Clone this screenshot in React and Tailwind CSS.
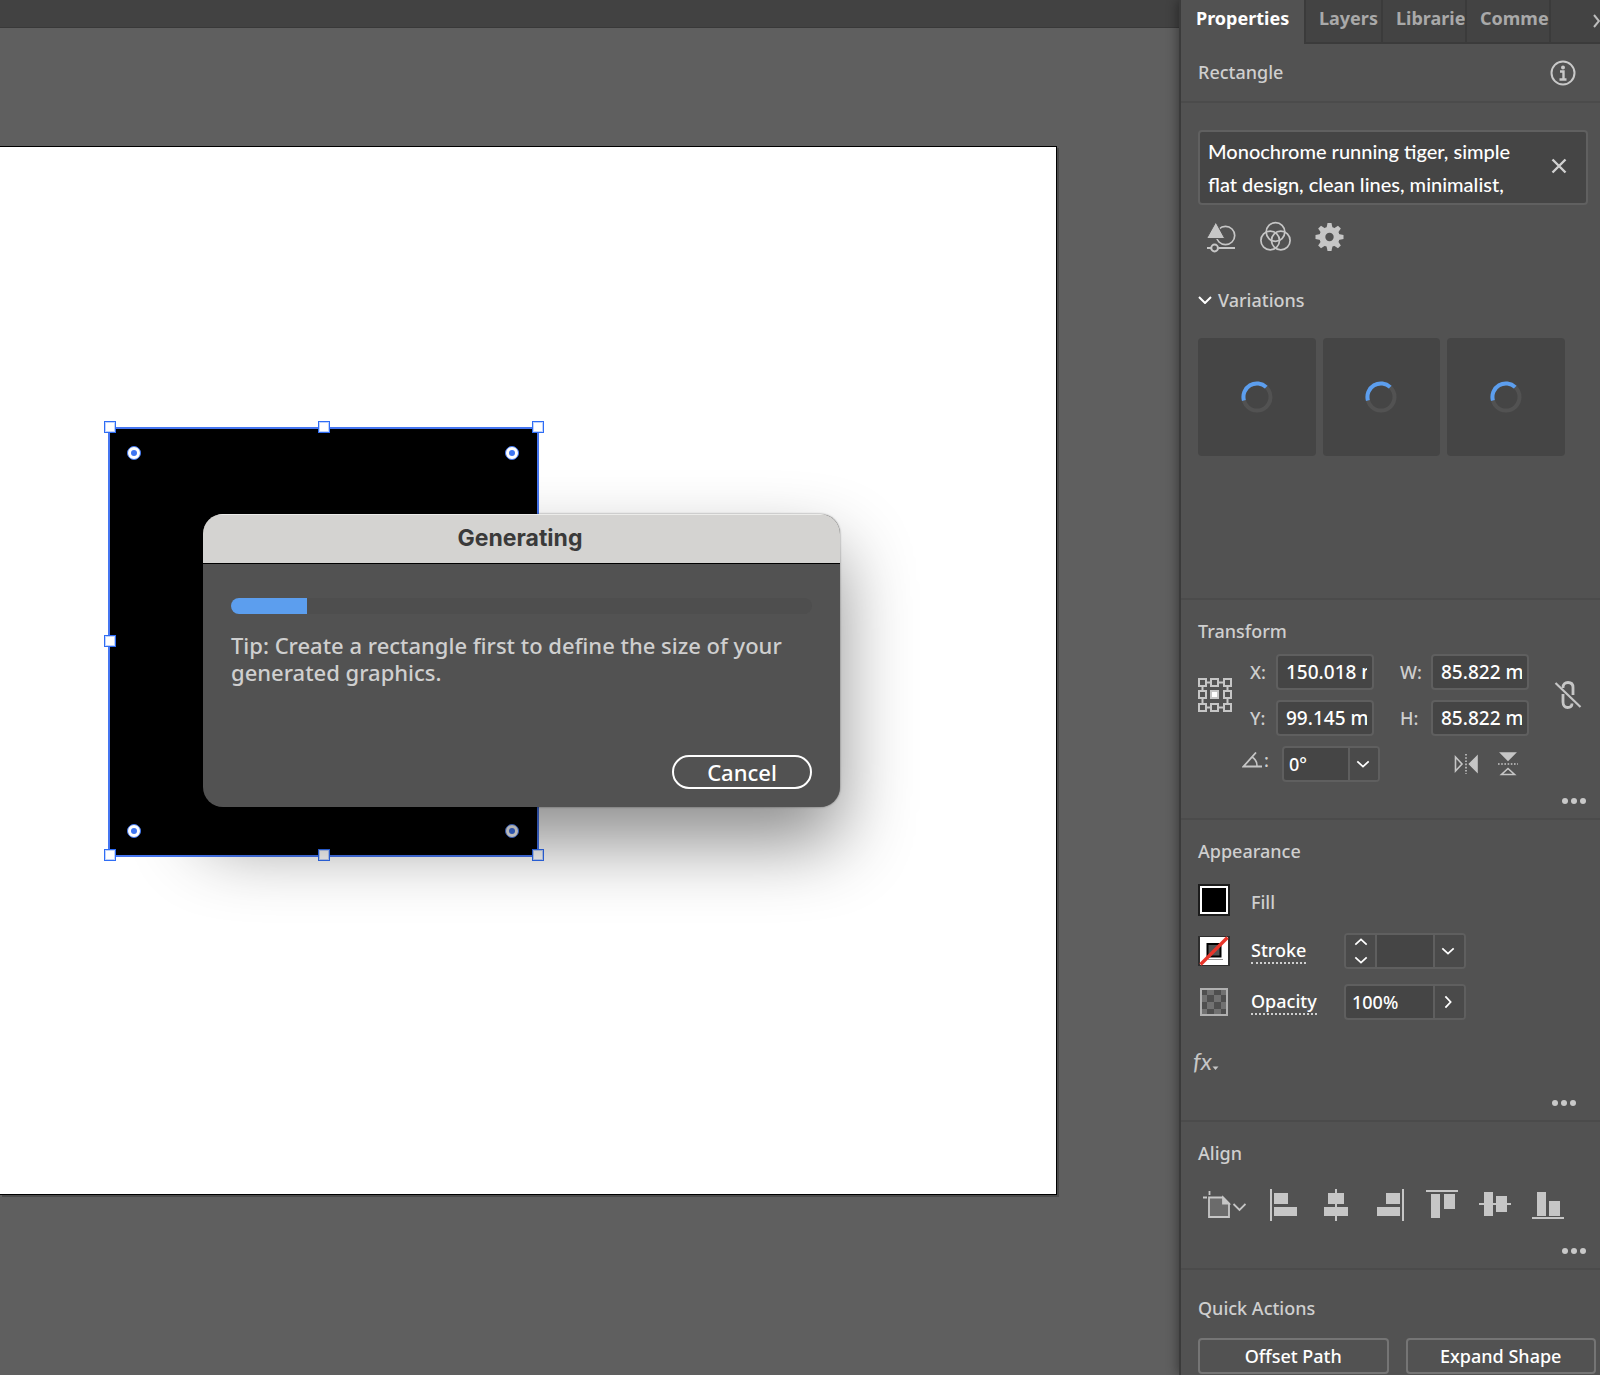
import React from "react";

const LABEL = "text-[#cfcfcf]";

function Chevron({ dir = "down" }) {
  const paths = {
    down: "M1.5 5 L8 11 L14.5 5",
    up: "M1.5 11 L8 5 L14.5 11",
    right: "M5 1.5 L11 8 L5 14.5",
  };
  return (
    <svg width="14" height="14" viewBox="0 0 16 16" fill="none" stroke="#fff" strokeWidth="2" aria-hidden="true">
      <path d={paths[dir]} />
    </svg>
  );
}

function More({ className = "mr-[14px]" }) {
  return (
    <button aria-label="More options" className={`flex h-3 items-center gap-[3px] ${className}`}>
      <span className="size-[6px] rounded-full bg-[#c9c9c9]" />
      <span className="size-[6px] rounded-full bg-[#c9c9c9]" />
      <span className="size-[6px] rounded-full bg-[#c9c9c9]" />
    </button>
  );
}

function Section({ title, children }) {
  return (
    <section className="border-b-2 border-[#4b4b4b] pt-[19px] pb-[11px] pl-[17px]">
      <h2 className={`h-6 text-[18px] leading-6 font-medium ${LABEL}`}>{title}</h2>
      {children}
    </section>
  );
}

function Field({ id, label, value }) {
  return (
    <>
      <label htmlFor={id} className={`text-[18px] font-medium ${LABEL}`}>{label}</label>
      <input
        id={id}
        defaultValue={value}
        className="h-9 w-[98px] rounded-[4px] border-2 border-[#5f5f5f] bg-[#454545] pr-[5px] pl-2 text-[19px] font-medium text-white"
      />
    </>
  );
}

function Spinner() {
  return (
    <div className="flex h-[118px] items-center justify-center rounded-[4px] bg-[#454545]">
      <svg width="32" height="32" viewBox="0 0 32 32" fill="none" strokeWidth="4" role="img" aria-label="Loading">
        <circle cx="16" cy="16" r="13.5" stroke="#525252" />
        <path d="M2.9 19.4 A13.5 13.5 0 0 1 25.2 6.1" stroke="#5c9eee" />
      </svg>
    </div>
  );
}

function Handle({ className }) {
  return <span className={`absolute size-3 border border-[#2f6df5] bg-white outline outline-[#2f6df5]/30 -outline-offset-2 ${className}`} />;
}

function CornerWidget({ className }) {
  return (
    <span className={`absolute flex size-[14px] items-center justify-center rounded-full border border-[#3f76f2] bg-white ${className}`}>
      <span className="size-[6px] rounded-full bg-[#3f76f2]" />
    </span>
  );
}

function SelectedShape() {
  return (
    <div className="absolute top-[280px] left-[108px] h-[430px] w-[431px] border-2 border-[#4575f0] bg-black">
      <Handle className="-top-[8px] -left-[6px]" />
      <Handle className="-top-[8px] left-[208px]" />
      <Handle className="-top-[8px] -right-[7px]" />
      <Handle className="top-[206px] -left-[6px]" />
      <Handle className="-bottom-[6px] -left-[6px]" />
      <Handle className="-bottom-[6px] left-[208px]" />
      <Handle className="-right-[7px] -bottom-[6px]" />
      <CornerWidget className="top-[17px] left-[17px]" />
      <CornerWidget className="top-[17px] right-[18px]" />
      <CornerWidget className="bottom-[17px] left-[17px]" />
      <CornerWidget className="right-[18px] bottom-[17px]" />
    </div>
  );
}

function Dialog() {
  return (
    <div
      role="dialog"
      aria-labelledby="dialog-title"
      className="absolute top-[367px] left-[203px] w-[637px] overflow-hidden rounded-[20px] bg-[#525252] shadow-[0_0_2px_rgba(0,0,0,0.5),0_36px_72px_rgba(0,0,0,0.45)]"
    >
      <h1 id="dialog-title" className="h-[50px] border-t border-b border-t-[#ececea] border-b-black bg-[#d4d3d1] pr-[3px] text-center font-['Inter',sans-serif] text-[23px] leading-[46px] font-bold text-[#3a3a3a]">
        Generating
      </h1>
      <div className="flex flex-col px-[28px] pt-[34px] pb-[18px]">
        <div role="progressbar" aria-label="Generating" aria-valuenow={13} aria-valuemin={0} aria-valuemax={100} className="h-4 overflow-hidden rounded-full bg-[#4e4e4e]">
          <div className="h-full w-[13%] bg-[#5c9eee]" />
        </div>
        <p className="mt-[18px] text-[22px] leading-[27px] font-medium text-[#cfcfcf]">
          Tip: Create a rectangle first to define the size of your
          <br />
          generated graphics.
        </p>
        <button className="mt-[69px] h-[34px] w-[140px] self-end rounded-full border-2 border-white text-[22px] leading-[30px] font-medium text-white">
          Cancel
        </button>
      </div>
    </div>
  );
}

function Tabs() {
  return (
    <div role="tablist" className="flex h-11 text-[18px] font-bold">
      <button role="tab" aria-selected="true" className="w-[123px] pb-[8px] pl-[15px] text-left text-white">Properties</button>
      <div className="flex min-w-0 flex-1 border-b-2 border-[#3b3b3b] bg-[#434343] text-[#a9a9a9]">
        <button role="tab" className="w-[79px] overflow-hidden border-r-2 border-l-2 border-[#3b3b3b] pb-[6px] pl-[13px] text-left">Layers</button>
        <button role="tab" className="w-[84px] overflow-hidden border-r-2 border-[#3b3b3b] pb-[6px] pl-[13px] text-left">Librarie</button>
        <button role="tab" className="w-[84px] overflow-hidden border-r-2 border-[#3b3b3b] pb-[6px] pl-[13px] text-left">Comme</button>
        <button aria-label="More panels" className="flex flex-1 items-center justify-end">
          <svg width="7" height="14" viewBox="0 0 7 14" fill="none" stroke="#bdbdbd" strokeWidth="2" aria-hidden="true">
            <path d="M1 1 L6 7 L1 13" />
          </svg>
        </button>
      </div>
    </div>
  );
}

function GeneratePanel() {
  return (
    <section className="border-b-2 border-[#4b4b4b] pt-[27px] pr-[12px] pb-[142px] pl-[17px]">
      <div className="flex h-[75px] items-center rounded-[4px] border-2 border-[#606060] bg-[#454545] pr-[19px] pl-[8px]">
        <textarea
          aria-label="Prompt"
          rows={2}
          className="h-[66px] flex-1 resize-none overflow-hidden bg-transparent font-['Lato','Open_Sans',sans-serif] text-[20px] leading-[33px] font-medium text-white"
          defaultValue={"Monochrome running tiger, simple\nflat design, clean lines, minimalist,"}
        />
        <button aria-label="Clear prompt" className="mb-1">
          <svg width="16" height="16" viewBox="0 0 16 16" stroke="#d0d0d0" strokeWidth="2.4" aria-hidden="true">
            <path d="M1.5 1.5 L14.5 14.5 M14.5 1.5 L1.5 14.5" />
          </svg>
        </button>
      </div>

      <div className="mt-4 flex h-8 items-center gap-6 pl-[9px]">
        <button aria-label="Style options">
          <svg width="29" height="32" viewBox="0 0 29 32" fill="none" stroke="#c6c6c6" strokeWidth="1.7" aria-hidden="true">
            <circle cx="18.500" cy="14.500" r="9.2" />
            <path d="M8.8 1 L17.800 17.500 H-0.4 Z" fill="#c6c6c6" stroke="#525252" strokeWidth="1" />
            <path d="M0 27 H4 M11.5 27 H28" strokeWidth="2" />
            <circle cx="7.6" cy="27" r="3.4" strokeWidth="2" />
          </svg>
        </button>
        <button aria-label="Colour options">
          <svg width="31" height="32" viewBox="0 0 31 32" fill="none" stroke="#c6c6c6" strokeWidth="1.7" aria-hidden="true">
            <circle cx="15.5" cy="11" r="9.3" />
            <circle cx="10.2" cy="19.500" r="9.3" />
            <circle cx="20.8" cy="19.500" r="9.3" />
          </svg>
        </button>
        <button aria-label="Settings">
          <svg width="29" height="30" viewBox="-14.5 -15 29 30" fill="#c6c6c6" aria-hidden="true">
            <path
              fillRule="evenodd"
              d="M0 -10.2 A10.2 10.2 0 1 1 0 10.2 A10.2 10.2 0 1 1 0 -10.2 Z M0 -4.2 A4.2 4.2 0 1 0 0 4.2 A4.2 4.2 0 1 0 0 -4.2 Z"
            />
            {[0, 45, 90, 135, 180, 225, 270, 315].map((a) => (
              <path key={a} transform={`rotate(${a})`} d="M-3 -9 L-2 -14 H2 L3 -9 Z" />
            ))}
          </svg>
        </button>
      </div>

      <button className={`mt-[35px] flex h-6 items-center gap-[6px] text-[18px] leading-6 font-medium ${LABEL}`}>
        <svg width="14" height="8" viewBox="0 0 14 8" fill="none" stroke="#fff" strokeWidth="2" aria-hidden="true">
          <path d="M1 1 L7 7 L13 1" />
        </svg>
        Variations
      </button>

      <div className="mt-[26px] mr-[23px] grid grid-cols-3 gap-[7px]">
        <Spinner />
        <Spinner />
        <Spinner />
      </div>
    </section>
  );
}

function ReferencePoint() {
  const spots = [1, 13, 26];
  return (
    <svg width="34" height="34" viewBox="0 0 34 34" fill="none" stroke="#c6c6c6" strokeWidth="2" role="img" aria-label="Reference point">
      <path d="M8 4.5 H13 M21 4.5 H26 M8 29.5 H13 M21 29.5 H26 M4.5 8 V13 M4.5 21 V26 M29.5 8 V13 M29.5 21 V26" />
      {spots.map((y) =>
        spots.map((x) => (
          <rect key={`${x}-${y}`} x={x} y={y} width="7" height="7" fill={x === 13 && y === 13 ? "#fff" : "none"} />
        ))
      )}
    </svg>
  );
}

function TransformPanel() {
  return (
    <Section title="Transform">
      <div className="mt-[11px] flex items-center">
        <ReferencePoint />
        <div className="ml-[18px] grid grid-cols-[26px_98px] items-center gap-y-[10px]">
          <Field id="x" label="X:" value="150.018 mm" />
          <Field id="y" label="Y:" value="99.145 mm" />
        </div>
        <div className="ml-[26px] grid grid-cols-[31px_98px] items-center gap-y-[10px]">
          <Field id="w" label="W:" value="85.822 mm" />
          <Field id="h" label="H:" value="85.822 mm" />
        </div>
        <button aria-label="Constrain width and height" className="ml-[25px]">
          <svg width="28" height="30" viewBox="0 0 28 30" fill="none" stroke="#c6c6c6" aria-hidden="true">
            <g strokeWidth="2.800">
              <path d="M9 8 V7.500 C9 4 11 2.500 14 2.500 C17 2.500 19 4 19 7.500 V15" />
              <path d="M9 14 V22 C9 25.500 11 27.500 13.500 27.500 C16.500 27.500 18 26 18 23.500" />
            </g>
            <path d="M1.500 3 L26.500 27" strokeWidth="2.200" />
          </svg>
        </button>
      </div>
      <div className="mt-[10px] flex items-center">
        <label htmlFor="angle" className={`mb-2 ml-11 flex w-[40px] items-center text-[18px] font-medium ${LABEL}`}>
          <svg width="20" height="16" viewBox="0 0 20 16" fill="none" stroke="#c6c6c6" strokeWidth="1.800" role="img" aria-label="Angle">
            <path d="M14 0.500 L1.500 14.500 H20" />
            <path d="M10 5 C13.500 7 15 10 15 14" strokeWidth="1.500" />
          </svg>
          <span className="pl-[2px]">:</span>
        </label>
        <div className="flex h-9 w-[98px] overflow-hidden rounded-[4px] border-2 border-[#5f5f5f] bg-[#454545]">
          <input id="angle" defaultValue="0°" className="w-[64px] pl-[5px] text-[18px] font-medium text-white" />
          <button aria-label="Angle presets" className="flex flex-1 items-center justify-center border-l-2 border-[#5f5f5f] bg-[#4a4a4a] pr-[2px]">
            <Chevron />
          </button>
        </div>
        <button aria-label="Flip horizontally" className="ml-[74px]">
          <svg width="24" height="20" viewBox="0 0 24 20" fill="none" stroke="#c6c6c6" strokeWidth="1.600" aria-hidden="true">
            <path d="M1.500 3 L8 10 L1.500 17 Z" />
            <path d="M12 0 V20" strokeDasharray="1.600 1.600" />
            <path d="M23 2.500 L15.500 10 L23 17.500 Z" fill="#c6c6c6" />
          </svg>
        </button>
        <button aria-label="Flip vertically" className="ml-5">
          <svg width="20" height="24" viewBox="0 0 20 24" fill="none" stroke="#c6c6c6" strokeWidth="1.600" aria-hidden="true">
            <path d="M3 1 H17 L10 8 Z" fill="#c6c6c6" />
            <path d="M0 12 H20" strokeDasharray="1.600 1.600" />
            <path d="M3.500 22.500 H16.500 L10 16.500 Z" />
          </svg>
        </button>
      </div>
      <div className="mt-[13px] flex justify-end">
        <More />
      </div>
    </Section>
  );
}

function AppearancePanel() {
  const link = "border-b-2 border-dotted border-[#cfcfcf] text-[18px] leading-[20px] font-medium text-white";
  return (
    <Section title="Appearance">
      <div className="mt-[19px] grid grid-cols-[53px_93px_122px] items-center gap-y-[15px]">
        <button aria-label="Fill colour" className="size-8 border-2 border-[#1c1c1c] bg-white p-[2px]">
          <span className="block size-full bg-black" />
        </button>
        <span className={`col-span-2 flex h-9 items-center pt-1 text-[18px] font-medium ${LABEL}`}>Fill</span>

        <button aria-label="Stroke colour">
          <svg width="32" height="30" viewBox="0 0 32 30" aria-hidden="true">
            <rect width="32" height="30" fill="#2e2e2e" />
            <rect x="2" y="1" width="28" height="28" fill="#fff" />
            <rect x="9.500" y="8" width="13" height="12.500" fill="#525252" stroke="#000" strokeWidth="2" />
            <path d="M10 23.500 H25" stroke="#999" strokeWidth="1" />
            <path d="M2.500 28.500 L29.500 1.500" stroke="#e8352a" strokeWidth="3.400" />
          </svg>
        </button>
        <div>
          <a href="#stroke" className={link}>Stroke</a>
        </div>
        <div className="flex h-9 overflow-hidden rounded-[4px] border-2 border-[#5f5f5f] bg-[#454545]">
          <div className="flex w-[31px] flex-col items-center justify-center gap-1 border-r-2 border-[#5f5f5f] bg-[#4a4a4a]">
            <button aria-label="Increase stroke"><Chevron dir="up" /></button>
            <button aria-label="Decrease stroke"><Chevron /></button>
          </div>
          <input aria-label="Stroke weight" className="w-[56px] text-white" />
          <button aria-label="Stroke presets" className="flex flex-1 items-center justify-center border-l-2 border-[#5f5f5f] bg-[#4a4a4a] pr-[3px]">
            <Chevron />
          </button>
        </div>

        <svg width="32" height="30" viewBox="0 0 32 30" aria-hidden="true">
          <rect x="3" y="2" width="26" height="26" fill="#4f4f4f" stroke="#b0b0b0" strokeWidth="2" />
          <g fill="#717171">
            <path d="M9 3 h7 v5 h-7 Z M23 3 h5 v5 h-5 Z M4 8 h5 v7 h-5 Z M16 8 h7 v7 h-7 Z M9 15 h7 v7 h-7 Z M23 15 h5 v7 h-5 Z M4 22 h5 v5 h-5 Z M16 22 h7 v5 h-7 Z" />
          </g>
        </svg>
        <div>
          <a href="#opacity" className={link}>Opacity</a>
        </div>
        <div className="flex h-9 overflow-hidden rounded-[4px] border-2 border-[#5f5f5f] bg-[#454545]">
          <input aria-label="Opacity" defaultValue="100%" className="w-[87px] pl-[6px] text-[18px] font-medium text-white" />
          <button aria-label="Opacity slider" className="flex flex-1 items-center justify-center border-l-2 border-[#5f5f5f] bg-[#4a4a4a] pr-[3px]">
            <Chevron dir="right" />
          </button>
        </div>
      </div>
      <button aria-label="Effects" className="mt-[29px] -ml-[5px] flex h-6 items-end text-[#c6c6c6]">
        <span className="font-['Lato',sans-serif] text-[24px] leading-6 italic">fx</span>
        <svg width="7" height="8" viewBox="0 0 7 8" fill="currentColor" aria-hidden="true">
          <path d="M0.500 1.500 H6.500 L3.500 5 Z" />
        </svg>
      </button>
      <div className="mt-6 flex justify-end">
        <More className="mr-6" />
      </div>
    </Section>
  );
}

const ALIGN_ICONS = [
  { label: "Align left", bars: [[4, 4, 14, 11], [4, 18, 23, 9]], line: [0, 0, 2, 32] },
  { label: "Align centre", bars: [[6, 4, 16, 11], [2, 18, 24, 9]], line: [13, 0, 2, 32] },
  { label: "Align right", bars: [[11, 4, 14, 11], [2, 18, 23, 9]], line: [27, 0, 2, 32] },
  { label: "Align top", bars: [[4, 5, 9, 24], [17, 5, 11, 15]], line: [-1, 1, 32, 2] },
  { label: "Align middle", bars: [[4, 3, 9, 24], [16, 7, 11, 16]], line: [-1, 14, 32, 2] },
  { label: "Align bottom", bars: [[5, 3, 9, 24], [17, 12, 11, 15]], line: [0, 28, 32, 2] },
];

function AlignPanel() {
  return (
    <Section title="Align">
      <div className="mt-6 flex h-8 items-center">
        <button aria-label="Align to" className="mr-6 ml-[5px] w-[43px]">
          <svg width="43" height="32" viewBox="0 0 43 32" fill="none" stroke="#c6c6c6" strokeWidth="1.800" aria-hidden="true">
            <path d="M6 8.500 H20 L26 14.500 V28 H6 Z" fill="#6b6b6b" />
            <path d="M20 8.500 V14.500 H26 Z" fill="#c6c6c6" />
            <path d="M0 8.500 H4 M6.500 2 V6" />
            <path d="M30.500 15 L36.500 21 L42.500 15" />
          </svg>
        </button>
        <div className="mr-9 flex flex-1 justify-between">
          {ALIGN_ICONS.map(({ label, bars, line }) => (
            <button key={label} aria-label={label}>
              <svg width="32" height="32" viewBox="0 0 32 32" fill="#c6c6c6" overflow="visible" aria-hidden="true">
                {[...bars, line].map(([x, y, w, h], i) => (
                  <rect key={i} x={x} y={y} width={w} height={h} />
                ))}
              </svg>
            </button>
          ))}
        </div>
      </div>
      <div className="mt-6 flex justify-end">
        <More />
      </div>
    </Section>
  );
}

function QuickActions() {
  const btn = "h-9 rounded-[4px] border-2 border-[#757575] text-[18px] leading-8 font-medium text-white";
  return (
    <section className="pt-[26px] pr-[4px] pl-[17px]">
      <h2 className={`h-6 text-[18px] leading-6 font-medium ${LABEL}`}>Quick Actions</h2>
      <div className="mt-[18px] grid grid-cols-2 gap-[17px]">
        <button className={btn}>Offset Path</button>
        <button className={btn}>Expand Shape</button>
      </div>
    </section>
  );
}

export default function App() {
  return (
    <div className="flex min-h-screen overflow-hidden bg-[#5f5f5f] font-['Noto_Sans','Open_Sans',sans-serif]">
      <main className="min-w-0 flex-1">
        <div className="h-7 border-b border-[#393939] bg-[#424242]" />
        <div className="relative mt-[118px] mr-[122px] h-[1049px] border border-l-0 border-black bg-white shadow-[2px_2px_0_#4a4a4a]">
          <SelectedShape />
          <Dialog />
        </div>
      </main>
      <aside className="relative w-[421px] shrink-0 border-l-2 border-[#3b3b3b] bg-[#525252] shadow-[-2px_0_10px_rgba(0,0,0,0.35)]">
        <Tabs />
        <header className="flex h-[59px] items-center justify-between border-b-2 border-[#4b4b4b] pr-6 pl-[17px]">
          <span className={`text-[18px] font-medium ${LABEL}`}>Rectangle</span>
          <button aria-label="Information">
            <svg width="26" height="26" viewBox="0 0 26 26" fill="none" stroke="#c9c9c9" strokeWidth="2" aria-hidden="true">
              <circle cx="13" cy="13" r="11.500" />
              <circle cx="13" cy="7.500" r="2" fill="#c9c9c9" stroke="none" />
              <path d="M10 11.500 H13.500 V19 M9.500 19.500 H16.500" strokeWidth="2.400" />
            </svg>
          </button>
        </header>
        <GeneratePanel />
        <TransformPanel />
        <AppearancePanel />
        <AlignPanel />
        <QuickActions />
      </aside>
    </div>
  );
}
